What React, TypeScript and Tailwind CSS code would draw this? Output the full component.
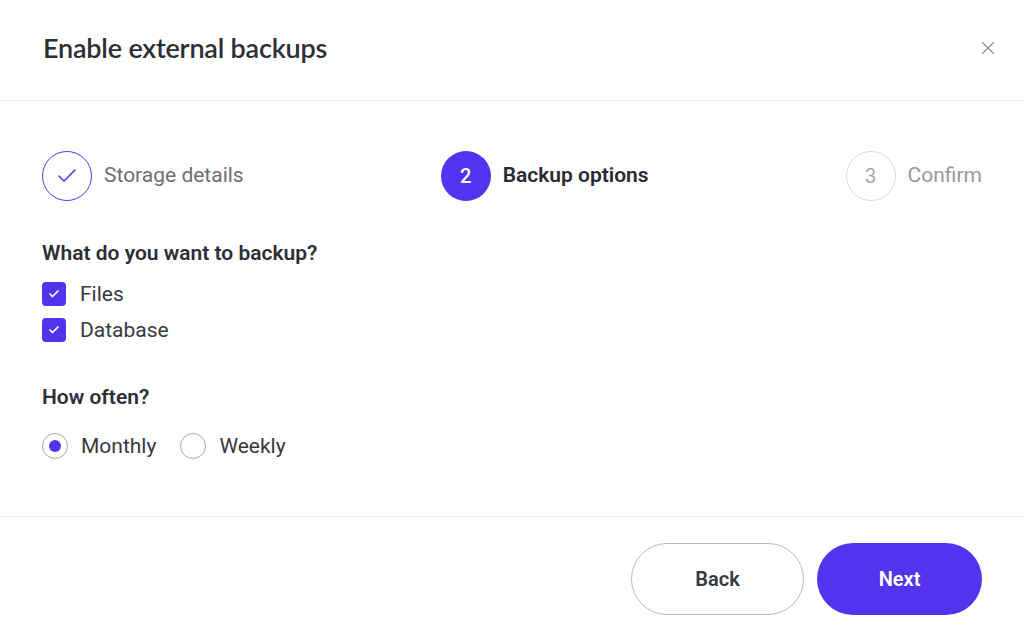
import { X, Check } from "lucide-react";

const body = { fontFamily: "Roboto, 'Liberation Sans', sans-serif" };

function Step({
  state,
  num,
  label,
}: {
  state: "done" | "active" | "todo";
  num: number;
  label: string;
}) {
  return (
    <div className="flex items-center gap-3">
      {state === "done" && (
        <div className="flex h-[50px] w-[50px] items-center justify-center rounded-full border-[1.5px] border-[#5333ed] text-[#5333ed]">
          <Check className="h-6 w-6" strokeWidth={1.6} />
        </div>
      )}
      {state === "active" && (
        <div className="flex h-[50px] w-[50px] items-center justify-center rounded-full bg-[#5333ed] text-[20px] font-medium text-white">
          {num}
        </div>
      )}
      {state === "todo" && (
        <div className="flex h-[50px] w-[50px] items-center justify-center rounded-full border-[1.5px] border-[#d9d9dc] text-[20px] text-[#a6a6ab]">
          {num}
        </div>
      )}
      <span
        className={
          state === "active"
            ? "text-[21px] font-semibold text-[#2a2a33]"
            : state === "done"
            ? "text-[21px] text-[#6e6e74]"
            : "text-[21px] text-[#98989d]"
        }
      >
        {label}
      </span>
    </div>
  );
}

function CheckBox({ label }: { label: string }) {
  return (
    <label className="flex items-center gap-[14px]">
      <span className="flex h-6 w-6 items-center justify-center rounded-[4px] bg-[#5333ed] text-white">
        <Check className="h-3 w-3" strokeWidth={3.5} />
      </span>
      <span className="text-[21px] leading-[28px] text-[#38383f]">{label}</span>
    </label>
  );
}

function Radio({ label, on }: { label: string; on?: boolean }) {
  return (
    <label className="flex items-center gap-[13px]">
      <span className="flex h-[26px] w-[26px] items-center justify-center rounded-full border-[1.5px] border-[#aaaab0] bg-white">
        {on && <span className="h-3 w-3 rounded-full bg-[#5333ed]" />}
      </span>
      <span className="text-[21px] leading-[28px] text-[#38383f]">{label}</span>
    </label>
  );
}

export default function App() {
  return (
    <div className="flex h-[634px] w-[1024px] flex-col bg-white" style={body}>
      <div className="flex h-[101px] items-center justify-between border-b border-[#efeff1] pb-[4px] pl-[43px] pr-[25px]">
        <h1
          className="text-[27px] font-semibold tracking-[-0.2px] text-[#2e2e36]"
          style={{ fontFamily: "Lato, 'Open Sans', sans-serif" }}
        >
          Enable external backups
        </h1>
        <X className="h-[22px] w-[22px] text-[#8b8b90]" strokeWidth={1.3} />
      </div>

      <div className="flex flex-1 flex-col border-b border-[#efeff1] px-[42px] pt-[50px]">
        <div className="flex items-center justify-between">
          <Step state="done" num={1} label="Storage details" />
          <Step state="active" num={2} label="Backup options" />
          <Step state="todo" num={3} label="Confirm" />
        </div>

        <h2 className="mt-[38px] text-[21px] leading-[28px] font-semibold text-[#2e2e36]">
          What do you want to backup?
        </h2>
        <div className="mt-[13px] flex flex-col gap-[8px]">
          <CheckBox label="Files" />
          <CheckBox label="Database" />
        </div>

        <h2 className="mt-[39px] text-[21px] leading-[28px] font-semibold text-[#2e2e36]">
          How often?
        </h2>
        <div className="mt-[21px] flex items-center gap-[24px]">
          <Radio label="Monthly" on />
          <Radio label="Weekly" />
        </div>
      </div>

      <div className="flex h-[117px] items-start justify-end gap-[13px] pr-[42px] pt-[26px]">
        <button className="h-[72px] w-[173px] rounded-full border border-[#b9b9be] text-[20px] font-semibold text-[#38383f]">
          Back
        </button>
        <button className="h-[72px] w-[165px] rounded-full bg-[#5333ed] text-[20px] font-semibold text-white">
          Next
        </button>
      </div>
    </div>
  );
}
